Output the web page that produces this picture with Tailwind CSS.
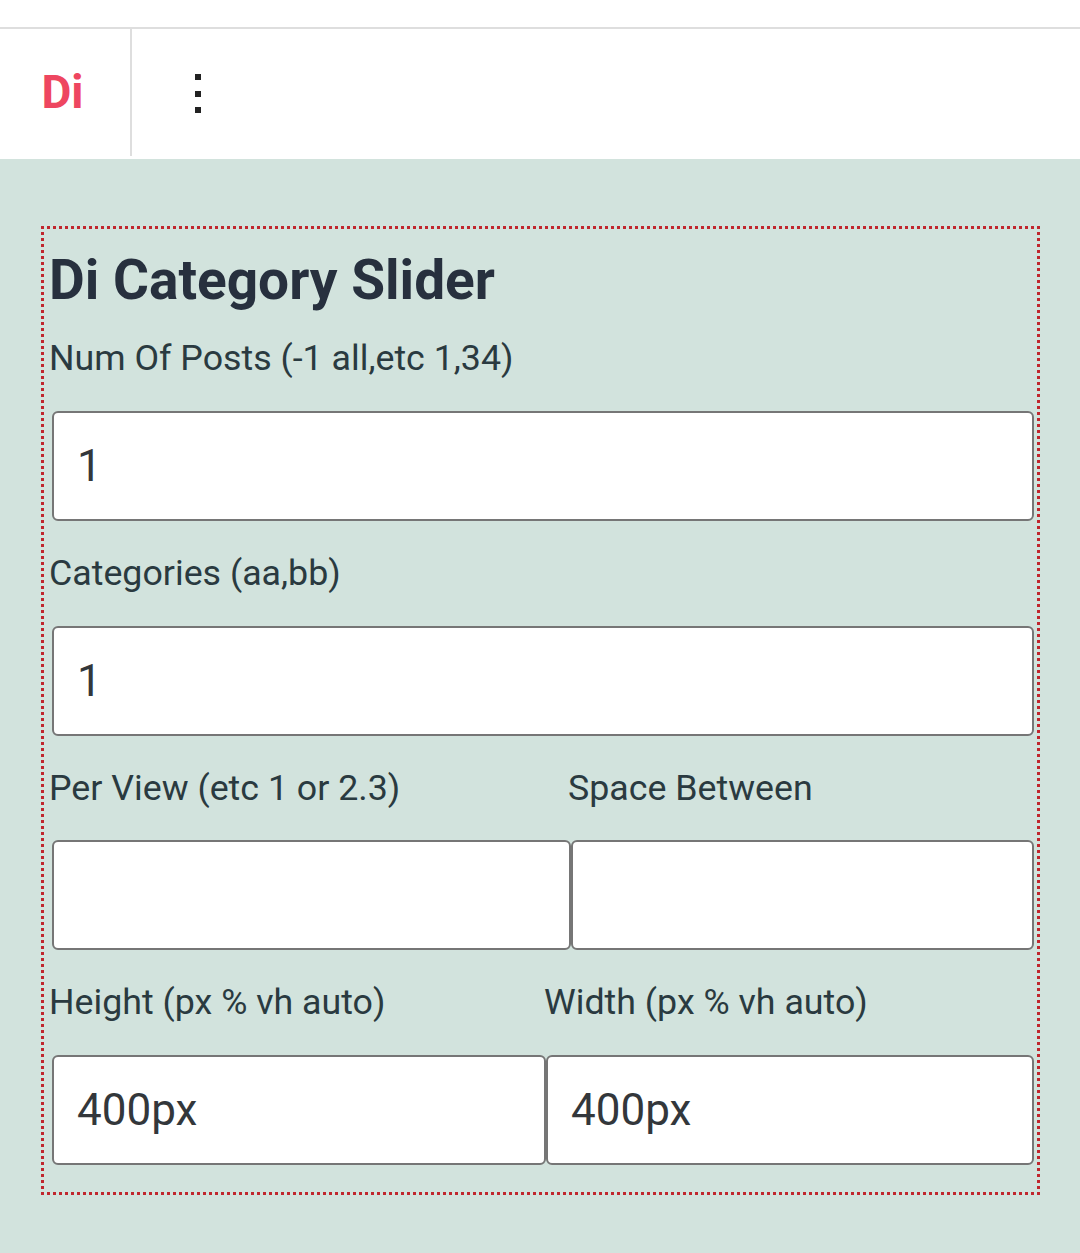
<!DOCTYPE html>
<html><head><meta charset="utf-8"><script src="https://cdn.jsdelivr.net/npm/@tailwindcss/browser@4"></script></head>
<body class="m-0 bg-white font-['Roboto',sans-serif]">
<div class="w-[1080px] h-[1253px] overflow-hidden flex flex-col bg-[#d2e3dd]">
  <div class="bg-white h-[27px] border-b-0"></div>
  <div class="bg-white h-[132px] border-t-2 border-[#dedede] flex items-start">
    <div class="w-[132px] h-[127px] border-r-2 border-[#dedede] flex items-center justify-center pr-[5px]">
      <span class="text-[46px] leading-none font-bold text-[#ee4660] relative top-[-1px]">Di</span>
    </div>
    <div class="ml-[63px] mt-[45px] flex flex-col gap-[10.5px]">
      <span class="block w-[6px] h-[6px] bg-[#222]"></span>
      <span class="block w-[6px] h-[6px] bg-[#222]"></span>
      <span class="block w-[6px] h-[6px] bg-[#222]"></span>
    </div>
  </div>
  <div class="mt-[67px] mx-[41px] w-[999px] h-[969px] border-[3px] border-dotted border-[#c0262d] pl-[5px] pr-[3px] text-[#2a3a40] flex flex-col">
    <h1 class="text-[55px] leading-[64px] font-bold text-[#27303e] mt-[19px] h-[64px]">Di Category Slider</h1>
    <label class="text-[35.75px] leading-[42px] h-[42px] mt-[25px] block">Num Of Posts (-1 all,etc 1,34)</label>
    <input value="1" class="block mt-[32px] ml-[3px] w-[982px] h-[110px] bg-white border-2 border-[#767676] rounded-[6px] px-[23px] text-[44px] text-[#33373b]">
    <label class="text-[35.75px] leading-[42px] h-[42px] mt-[31px] block">Categories (aa,bb)</label>
    <input value="1" class="block mt-[32px] ml-[3px] w-[982px] h-[110px] bg-white border-2 border-[#767676] rounded-[6px] px-[23px] text-[44px] text-[#33373b]">
    <div class="flex mt-[31px] h-[42px] text-[35.75px] leading-[42px]">
      <label class="w-[519px]">Per View (etc 1 or 2.3)</label>
      <label>Space Between</label>
    </div>
    <div class="flex mt-[31px] ml-[3px]">
      <input class="w-[519px] h-[110px] bg-white border-2 border-[#767676] rounded-[6px] px-[23px] text-[44px]">
      <input class="w-[463px] h-[110px] bg-white border-2 border-[#767676] rounded-[6px] px-[23px] text-[44px]">
    </div>
    <div class="flex mt-[31px] h-[42px] text-[35.75px] leading-[42px]">
      <label class="w-[495px]">Height (px % vh auto)</label>
      <label>Width (px % vh auto)</label>
    </div>
    <div class="flex mt-[32px] ml-[3px]">
      <input value="400px" class="w-[494px] h-[110px] bg-white border-2 border-[#767676] rounded-[6px] px-[23px] text-[44px] text-[#33373b]">
      <input value="400px" class="w-[488px] h-[110px] bg-white border-2 border-[#767676] rounded-[6px] px-[23px] text-[44px] text-[#33373b]">
    </div>
  </div>
</div>
</body></html>
